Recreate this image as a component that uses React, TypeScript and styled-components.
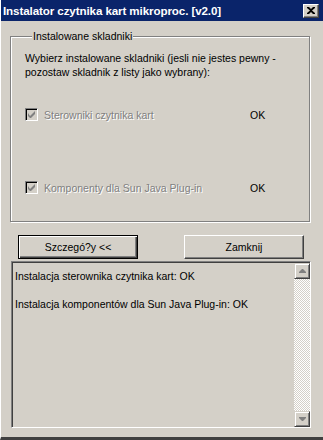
import React from 'react';
import styled, { createGlobalStyle } from 'styled-components';

const GlobalStyle = createGlobalStyle`
  html, body {
    margin: 0;
    padding: 0;
    background: #d4d0c8;
  }
`;

/* ramka całego okna dialogowego */
const Window = styled.div`
  width: 323px;
  height: 440px;
  box-sizing: border-box;
  background: #d4d0c8;
  border-left: 1px solid #ffffff;
  border-bottom: 3px solid #404040;
  display: flex;
  flex-direction: column;
  font-family: 'Liberation Sans', Arial, sans-serif;
  font-size: 10.5px;
  color: #000;
`;

const TitleBar = styled.div`
  height: 21px;
  background: #0a246a;
  display: flex;
  align-items: center;
  justify-content: space-between;
  padding: 0 4px 0 2px;
  box-sizing: border-box;
`;

const Title = styled.span`
  color: #fff;
  font-weight: bold;
  font-size: 11.6px;
  letter-spacing: -0.1px;
`;

const CloseBox = styled.div`
  width: 16px;
  height: 14px;
  box-sizing: border-box;
  background: #d4d0c8;
  border-top: 1px solid #fff;
  border-left: 1px solid #fff;
  border-right: 1px solid #404040;
  border-bottom: 1px solid #404040;
  box-shadow: inset -1px -1px 0 #808080;
  display: flex;
  align-items: center;
  justify-content: center;
`;

const Body = styled.div`
  flex: 1;
  display: flex;
  flex-direction: column;
  padding: 9px 13px 6px 9px;
`;

/* wytrawiona ramka grupy */
const Group = styled.fieldset`
  margin: 0;
  height: 192px;
  box-sizing: border-box;
  border: 1px solid #808080;
  box-shadow: inset 1px 1px 0 #fff, 1px 1px 0 #fff;
  padding: 9px 14px 0 14px;
  display: flex;
  flex-direction: column;
`;

const Legend = styled.legend`
  background: #d4d0c8;
  padding: 0 1px;
  margin-left: 7px;
  font-size: 10.5px;
`;

const Intro = styled.p`
  margin: 0;
  line-height: 14px;
`;

const Row = styled.div<{ $top: number }>`
  display: flex;
  align-items: center;
  margin-top: ${p => p.$top}px;
  height: 13px;
`;

const CheckBox = styled.span`
  width: 13px;
  height: 13px;
  box-sizing: border-box;
  border-top: 1px solid #808080;
  border-left: 1px solid #808080;
  border-right: 1px solid #fff;
  border-bottom: 1px solid #fff;
  box-shadow: inset 1px 1px 0 #000, inset -1px -1px 0 #d4d0c8;
  background: #d4d0c8;
  display: flex;
  align-items: center;
  justify-content: center;
  flex-shrink: 0;
`;

const DisabledLabel = styled.span`
  margin-left: 6px;
  color: #808080;
  text-shadow: 1px 1px 0 #fff;
  width: 206px;
`;

const Status = styled.span``;

const ButtonRow = styled.div`
  display: flex;
  justify-content: space-between;
  padding: 0 6px 0 8px;
  margin-top: 13px;
`;

const Button = styled.button<{ $default?: boolean }>`
  width: 120px;
  height: 24px;
  box-sizing: border-box;
  background: #d4d0c8;
  font-family: 'Liberation Sans', Arial, sans-serif;
  font-size: 10.5px;
  color: #000;
  padding: 0;
  border-top: 1px solid #fff;
  border-left: 1px solid #fff;
  border-right: 1px solid #404040;
  border-bottom: 1px solid #404040;
  box-shadow: inset -1px -1px 0 #808080;
  ${p => p.$default && `
    border: 1px solid #000;
    box-shadow: inset 1px 1px 0 #fff, inset -1px -1px 0 #404040, inset -2px -2px 0 #808080;
  `}
`;

/* pole z logiem instalacji */
const LogBox = styled.div`
  margin: 2px -1px 3px 1px;
  flex: 1;
  box-sizing: border-box;
  border-top: 1px solid #808080;
  border-left: 1px solid #808080;
  border-right: 1px solid #fff;
  border-bottom: 1px solid #fff;
  box-shadow: inset 1px 1px 0 #404040;
  display: flex;
`;

const LogText = styled.div`
  flex: 1;
  padding: 7px 0 0 3px;
  line-height: 14px;
`;

const LogLine = styled.div`
  margin-bottom: 14px;
`;

const ScrollBar = styled.div`
  width: 16px;
  display: flex;
  flex-direction: column;
  margin-top: 1px;
  background-color: #fff;
  background-image: conic-gradient(#d4d0c8 25%, #fff 0 50%, #d4d0c8 0 75%, #fff 0);
  background-size: 2px 2px;
`;

const Track = styled.div`
  flex: 1;
`;

const ArrowButton = styled.div`
  width: 16px;
  height: 16px;
  box-sizing: border-box;
  background: #d4d0c8;
  border-top: 1px solid #d4d0c8;
  border-left: 1px solid #d4d0c8;
  border-right: 1px solid #404040;
  border-bottom: 1px solid #404040;
  box-shadow: inset 1px 1px 0 #fff, inset -1px -1px 0 #808080;
  display: flex;
  align-items: center;
  justify-content: center;
`;

const Check = () => (
  <svg width="7" height="7" viewBox="0 0 7 7">
    <path d="M0 2v3l2 2h1l4-4V0L2 5z" fill="#808080" />
  </svg>
);

const Arrow = ({ up }: { up: boolean }) => (
  <svg width="7" height="4" viewBox="0 0 7 4">
    <path d={up ? 'M3 0h1l3 3v1H0V3z' : 'M0 0h7v1L4 4H3L0 1z'} fill="#808080" />
  </svg>
);

const App: React.FC = () => {
  return (
    <>
      <GlobalStyle />
      <Window>
        <TitleBar>
          <Title>Instalator czytnika kart mikroproc. [v2.0]</Title>
          <CloseBox>
            <svg width="8" height="7" viewBox="0 0 8 7">
              <path d="M0 0h2l2 2 2-2h2v1L5 3.5 8 6v1H6L4 5 2 7H0V6l3-2.5L0 1z" fill="#000" />
            </svg>
          </CloseBox>
        </TitleBar>
        <Body>
          <Group>
            <Legend>Instalowane skladniki</Legend>
            <Intro>
              Wybierz instalowane skladniki (jesli nie jestes pewny -<br />
              pozostaw skladnik z listy jako wybrany):
            </Intro>
            <Row $top={29}>
              <CheckBox><Check /></CheckBox>
              <DisabledLabel>Sterowniki czytnika kart</DisabledLabel>
              <Status>OK</Status>
            </Row>
            <Row $top={60}>
              <CheckBox><Check /></CheckBox>
              <DisabledLabel>Komponenty dla Sun Java Plug-in</DisabledLabel>
              <Status>OK</Status>
            </Row>
          </Group>
          <ButtonRow>
            <Button $default>Szczegó?y &lt;&lt;</Button>
            <Button>Zamknij</Button>
          </ButtonRow>
          <LogBox>
            <LogText>
              <LogLine>Instalacja sterownika czytnika kart: OK</LogLine>
              <LogLine>Instalacja komponentów dla Sun Java Plug-in: OK</LogLine>
            </LogText>
            <ScrollBar>
              <ArrowButton><Arrow up /></ArrowButton>
              <Track />
              <ArrowButton><Arrow up={false} /></ArrowButton>
            </ScrollBar>
          </LogBox>
        </Body>
      </Window>
    </>
  );
};

export default App;
